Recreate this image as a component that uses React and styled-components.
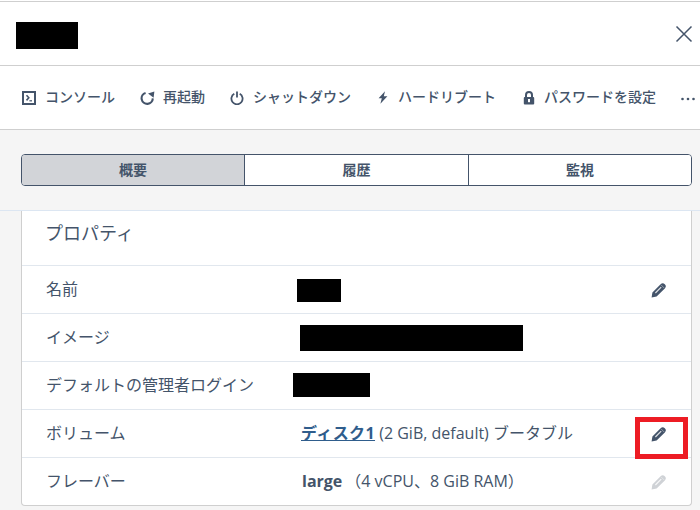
import styled, { createGlobalStyle } from "styled-components"

const GlobalStyle = createGlobalStyle`
    html, body {
        margin: 0;
        padding: 0;
        background: #f5f5f5;
    }
    * {
        box-sizing: border-box;
    }
`

const tools = [
    { label: "コンソール", icon: <ConsoleIcon />, gap: 9, after: 25 },
    { label: "再起動", icon: <RestartIcon />, gap: 8, after: 25 },
    { label: "シャットダウン", icon: <PowerIcon />, gap: 9, after: 27 },
    { label: "ハードリブート", icon: <BoltIcon />, gap: 10, after: 27 },
    { label: "パスワードを設定", icon: <LockIcon />, gap: 9, after: 25 },
]

function ConsoleIcon() {
    return (
        <svg width="14" height="14" viewBox="0 0 14 14">
            <rect x="1" y="1" width="12" height="12" fill="none" stroke="#44546a" strokeWidth="2" />
            <path d="M4.5 4.2 L6.8 6.8 L4.5 9.4" fill="none" stroke="#44546a" strokeWidth="1.6" />
            <path d="M7.4 9.8 H10" stroke="#44546a" strokeWidth="1.2" />
        </svg>
    )
}

function RestartIcon() {
    return (
        <svg width="15" height="14" viewBox="0 0 15 14">
            <path d="M5.6 1.9 A5.6 5.6 0 1 0 12.8 7.4" fill="none" stroke="#44546a" strokeWidth="2.1" />
            <path d="M8 2.4 L14.4 0.6 L13.6 6.8 Z" fill="#44546a" />
        </svg>
    )
}

function PowerIcon() {
    return (
        <svg width="14" height="14" viewBox="0 0 14 14">
            <path d="M4.3 2.8 A5.6 5.6 0 1 0 9.7 2.8" fill="none" stroke="#44546a" strokeWidth="1.8" />
            <path d="M7 0.5 V6.5" stroke="#44546a" strokeWidth="1.8" />
        </svg>
    )
}

function BoltIcon() {
    return (
        <svg width="10" height="13" viewBox="0 0 10 13">
            <path d="M7 0.3 L0.6 7.2 H3.8 L2.4 12.7 L9.4 5.2 H5.8 Z" fill="#44546a" />
        </svg>
    )
}

function LockIcon() {
    return (
        <svg width="12" height="14" viewBox="0 0 12 14">
            <path d="M3 6 V4 A3 3 0 0 1 9 4 V6" fill="none" stroke="#44546a" strokeWidth="2" />
            <rect x="0.8" y="6" width="10.4" height="7.5" rx="1" fill="#44546a" />
            <rect x="5" y="8" width="2" height="3.2" fill="#fff" />
        </svg>
    )
}

function MoreIcon() {
    return (
        <svg width="14" height="4" viewBox="0 0 14 4">
            <circle cx="1.5" cy="2" r="1.3" fill="#44546a" />
            <circle cx="7" cy="2" r="1.3" fill="#44546a" />
            <circle cx="12.5" cy="2" r="1.3" fill="#44546a" />
        </svg>
    )
}

function PencilIcon({ color = "#44546a" }) {
    return (
        <svg width="15" height="15" viewBox="0 0 15 15">
            <path d="M0.6 14.4 L1.4 9.4 L9.6 1.2 A2.4 2.4 0 0 1 13.8 5.4 L5.6 13.6 Z" fill={color} />
            <path d="M4 9.6 L9.8 3.8 L10.6 4.6 L4.8 10.4 Z" fill="#fff" opacity="0.85" />
            <path d="M10 1.8 L13.2 5" stroke="#fff" strokeWidth="0.7" opacity="0.6" />
        </svg>
    )
}

export default function App() {
    return (
        <>
            <GlobalStyle />
            <Page>
                <Header>
                    <Redacted $w={62} $h={27} />
                    <CloseButton>
                        <svg width="18" height="18" viewBox="0 0 18 18">
                            <path d="M1.5 1.5 L16.5 16.5 M16.5 1.5 L1.5 16.5" stroke="#44546a" strokeWidth="1.5" />
                        </svg>
                    </CloseButton>
                </Header>

                <Toolbar>
                    {tools.map((t) => (
                        <Tool key={t.label} $gap={t.gap} $after={t.after}>
                            {t.icon}
                            <ToolLabel>{t.label}</ToolLabel>
                        </Tool>
                    ))}
                    <More><MoreIcon /></More>
                </Toolbar>

                <TabArea>
                    <Tabs>
                        <Tab $active>概要</Tab>
                        <Tab>履歴</Tab>
                        <Tab>監視</Tab>
                    </Tabs>
                </TabArea>

                <Body>
                    <Card>
                        <CardTitle>プロパティ</CardTitle>
                        <Row>
                            <Label>名前</Label>
                            <Value><Redacted $w={44} $h={23} $x={-4} $y={2} /></Value>
                            <EditButton><PencilIcon /></EditButton>
                        </Row>
                        <Row>
                            <Label>イメージ</Label>
                            <Value><Redacted $w={223} $h={26} $x={-1} /></Value>
                        </Row>
                        <Row>
                            <Label>デフォルトの管理者ログイン</Label>
                            <Value><Redacted $w={77} $h={24} $x={-8} $y={-2} /></Value>
                        </Row>
                        <Row>
                            <Label>ボリューム</Label>
                            <TextValue><DiskLink>ディスク1</DiskLink> (2 GiB, default) ブータブル</TextValue>
                            <EditButton><PencilIcon /></EditButton>
                            <Highlight />
                        </Row>
                        <Row>
                            <Label>フレーバー</Label>
                            <TextValue><Strong>large</Strong>（4 vCPU、8 GiB RAM）</TextValue>
                            <EditButton><PencilIcon color="#cfd2d6" /></EditButton>
                        </Row>
                    </Card>
                </Body>
            </Page>
        </>
    )
}

const Page = styled.div`
    width: 700px;
    height: 510px;
    overflow: hidden;
    background: #f5f5f5;
    color: #44546a;
    border-top: 1px solid #fff;
    font-family: "Open Sans", "Noto Sans CJK JP", sans-serif;
`

const Header = styled.div`
    height: 65px;
    padding: 20px 7px 0 16px;
    display: flex;
    justify-content: space-between;
    align-items: flex-start;
    background: #fff;
    border-top: 1px solid #cfcfcf;
    border-bottom: 1px solid #cfcfcf;
`

const Redacted = styled.div`
    width: ${(p) => p.$w}px;
    height: ${(p) => p.$h}px;
    margin-left: ${(p) => p.$x || 0}px;
    margin-top: ${(p) => p.$y || 0}px;
    background: #000;
`

const CloseButton = styled.div`
    display: flex;
    margin-top: 3px;
`

const Toolbar = styled.div`
    height: 64px;
    padding: 0 5px 0 22px;
    display: flex;
    align-items: center;
    background: #fff;
    border-bottom: 1px solid #cfcfcf;
`

const Tool = styled.div`
    display: flex;
    align-items: center;
    gap: ${(p) => p.$gap}px;
    margin-right: ${(p) => p.$after}px;
    font-size: 14px;
    font-weight: 500;
    white-space: nowrap;
`

const ToolLabel = styled.span`
    padding-bottom: 4px;
`

const More = styled.div`
    display: flex;
    padding-top: 2px;
`

const TabArea = styled.div`
    height: 81px;
    padding: 24px 8px 0 21px;
    border-bottom: 1px solid #dce6f2;
`

const Tabs = styled.div`
    height: 32px;
    display: grid;
    grid-template-columns: 222px 224px 1fr;
    border: 1px solid #44546a;
    border-radius: 4px;
    background: #fff;
    overflow: hidden;
`

const Tab = styled.div`
    display: flex;
    align-items: center;
    justify-content: center;
    padding-bottom: 2px;
    font-size: 14px;
    font-weight: 700;
    background: ${(p) => (p.$active ? "#d2d4d8" : "#fff")};
    & + & {
        border-left: 1px solid #44546a;
    }
`

const Body = styled.div`
    padding: 0 8px 0 21px;
`

const Card = styled.div`
    background: #fff;
    border: 1px solid #cfcfcf;
    border-top: none;
    border-radius: 0 0 4px 4px;
`

const CardTitle = styled.div`
    height: 54px;
    padding: 0 23px 13px;
    display: flex;
    align-items: center;
    font-size: 18px;
`

const Row = styled.div`
    position: relative;
    height: 48px;
    padding: 0 24px;
    display: flex;
    align-items: center;
    border-top: 1px solid #e1e7ee;
    font-size: 16px;
`

const Label = styled.div`
    width: 255px;
    flex-shrink: 0;
    padding-bottom: 4px;
`

const Value = styled.div`
    flex: 1;
    white-space: nowrap;
`

const TextValue = styled(Value)`
    padding-bottom: 4px;
`

const DiskLink = styled.a`
    color: #2f5d8c;
    font-weight: 700;
    letter-spacing: 0.4px;
    text-decoration: underline;
`

const Strong = styled.b`
    margin: 0 3px 0 1px;
    font-weight: 700;
`

const EditButton = styled.div`
    display: flex;
    margin: 1px 1px 0 0;
`

const Highlight = styled.div`
    position: absolute;
    z-index: 1;
    left: 613px;
    top: 7px;
    width: 53px;
    height: 42px;
    border: 5px solid #ed1c24;
`
